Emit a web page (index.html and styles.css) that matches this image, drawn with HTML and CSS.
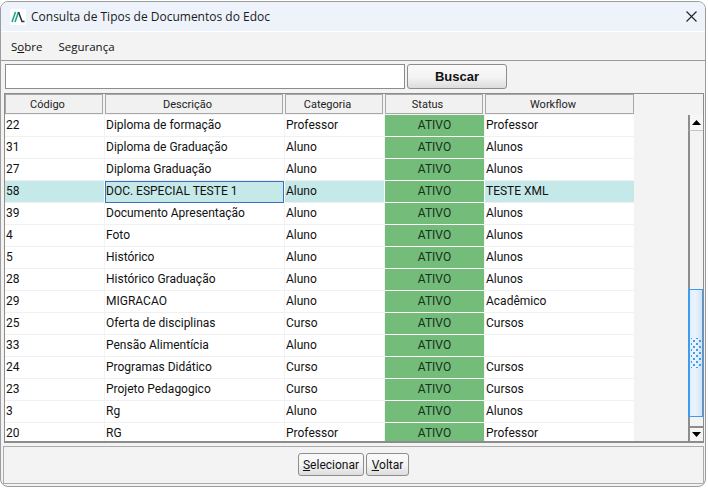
FILE: index.html
```html
<!DOCTYPE html>
<html lang="pt">
<head>
<meta charset="utf-8">
<title>Consulta de Tipos de Documentos do Edoc</title>
<link rel="stylesheet" href="styles.css">
</head>
<body>
<div class="window">
  <header class="titlebar">
    <svg class="logo" width="16" height="16" viewBox="0 0 16 16"><rect width="16" height="16" rx="2" fill="#fff"/><path d="M2 13 5.500 3M5 13 8.500 3" stroke="#1fa88f" stroke-width="1.6" fill="none"/><path d="M8.500 3 12 12.500h2.500" stroke="#25343a" stroke-width="1.500" fill="none"/></svg>
    <span class="title">Consulta de Tipos de Documentos do Edoc</span>
    <svg class="close" width="11" height="11" viewBox="0 0 11 11"><path d="M.5.5l10 10M10.500.5l-10 10" stroke="#222" stroke-width="1.1" fill="none"/></svg>
  </header>
  <nav class="menubar">
    <span>S<u>o</u>bre</span>
    <span>Segurança</span>
  </nav>
  <div class="search">
    <input class="search-input" type="text" aria-label="Buscar">
    <button class="btn btn-search">Buscar</button>
  </div>
  <div class="tableframe">
    <div class="tablecol">
      <div class="row head">
        <div class="h c1">Código</div><div class="h c2">Descrição</div><div class="h c3">Categoria</div><div class="h c4">Status</div><div class="h c5">Workflow</div>
      </div>
      <div class="row"><div class="c c1">22</div><div class="c c2">Diploma de formação</div><div class="c c3">Professor</div><div class="c c4 st">ATIVO</div><div class="c c5">Professor</div></div>
      <div class="row"><div class="c c1">31</div><div class="c c2">Diploma de Graduação</div><div class="c c3">Aluno</div><div class="c c4 st">ATIVO</div><div class="c c5">Alunos</div></div>
      <div class="row"><div class="c c1">27</div><div class="c c2">Diploma Graduação</div><div class="c c3">Aluno</div><div class="c c4 st">ATIVO</div><div class="c c5">Alunos</div></div>
      <div class="row sel"><div class="c c1">58</div><div class="c c2 focus">DOC. ESPECIAL TESTE 1</div><div class="c c3">Aluno</div><div class="c c4 st">ATIVO</div><div class="c c5">TESTE XML</div></div>
      <div class="row"><div class="c c1">39</div><div class="c c2">Documento Apresentação</div><div class="c c3">Aluno</div><div class="c c4 st">ATIVO</div><div class="c c5">Alunos</div></div>
      <div class="row"><div class="c c1">4</div><div class="c c2">Foto</div><div class="c c3">Aluno</div><div class="c c4 st">ATIVO</div><div class="c c5">Alunos</div></div>
      <div class="row"><div class="c c1">5</div><div class="c c2">Histórico</div><div class="c c3">Aluno</div><div class="c c4 st">ATIVO</div><div class="c c5">Alunos</div></div>
      <div class="row"><div class="c c1">28</div><div class="c c2">Histórico Graduação</div><div class="c c3">Aluno</div><div class="c c4 st">ATIVO</div><div class="c c5">Alunos</div></div>
      <div class="row"><div class="c c1">29</div><div class="c c2">MIGRACAO</div><div class="c c3">Aluno</div><div class="c c4 st">ATIVO</div><div class="c c5">Acadêmico</div></div>
      <div class="row"><div class="c c1">25</div><div class="c c2">Oferta de disciplinas</div><div class="c c3">Curso</div><div class="c c4 st">ATIVO</div><div class="c c5">Cursos</div></div>
      <div class="row"><div class="c c1">33</div><div class="c c2">Pensão Alimentícia</div><div class="c c3">Aluno</div><div class="c c4 st">ATIVO</div><div class="c c5"></div></div>
      <div class="row"><div class="c c1">24</div><div class="c c2">Programas Didático</div><div class="c c3">Curso</div><div class="c c4 st">ATIVO</div><div class="c c5">Cursos</div></div>
      <div class="row"><div class="c c1">23</div><div class="c c2">Projeto Pedagogico</div><div class="c c3">Curso</div><div class="c c4 st">ATIVO</div><div class="c c5">Cursos</div></div>
      <div class="row"><div class="c c1">3</div><div class="c c2">Rg</div><div class="c c3">Aluno</div><div class="c c4 st">ATIVO</div><div class="c c5">Alunos</div></div>
      <div class="row last"><div class="c c1">20</div><div class="c c2">RG</div><div class="c c3">Professor</div><div class="c c4 st">ATIVO</div><div class="c c5">Professor</div></div>
    </div>
    <div class="scrollbar">
      <div class="arrow"><svg width="9" height="5" viewBox="0 0 9 5"><path d="M4.500 0L9 5H0z" fill="#000"/></svg></div>
      <div class="track"></div>
      <div class="thumb"><div class="grip"></div></div>
      <div class="track small"></div>
      <div class="arrow down"><svg width="9" height="5" viewBox="0 0 9 5"><path d="M0 0h9L4.500 5z" fill="#000"/></svg></div>
    </div>
  </div>
  <footer class="actions">
    <button class="btn"><u>S</u>elecionar</button>
    <button class="btn"><u>V</u>oltar</button>
  </footer>
</div>
</body>
</html>
```
FILE: styles.css
```css
* { box-sizing: border-box; }
html, body { margin: 0; height: 100%; background: #fff; overflow: hidden; }
body { padding: 1px 0 0 0; font-family: Roboto, "Open Sans", sans-serif; color: #111; }
.window {
  width: 706px; height: 486px; background: #f3f3f3;
  border: 1px solid #9c9c9c; border-radius: 8px; overflow: hidden;
  display: flex; flex-direction: column;
}
.titlebar {
  height: 30px; flex: none; background: #eef3fb; display: flex; align-items: center;
  padding: 0 8px 0 9px; border-bottom: 1px solid #fff;
}
.logo { flex: none; }
.title { font: 12px "Open Sans", sans-serif; margin-left: 5px; flex: 1; color: #1a1a1a; }
.menubar {
  height: 29px; flex: none; display: flex; gap: 16px; align-items: center; padding: 0 10px;
  font: 11.500px "Open Sans", sans-serif; border-bottom: 1px solid #9a9a9a;
}
.search { display: flex; gap: 2px; padding: 3px 0 0 4px; height: 32px; flex: none; }
.search-input { width: 400px; height: 25px; border: 1px solid #8c8c8c; background: #fff; outline: 0; }
.btn {
  border: 1px solid #8e8e8e; border-radius: 3px; padding: 0;
  background: linear-gradient(#fafafa, #f3f3f3 55%, #dcdcdc);
  font: 12px Roboto, sans-serif; color: #111;
}
.btn-search { width: 100px; height: 25px; font: bold 13px "Liberation Sans", sans-serif; }
.tableframe {
  margin: 0 1px 0 3px; height: 350px; flex: none; border: 1px solid #8c8c8c; border-width: 1px 1px 2px 1px;
  display: flex; background: #f3f3f3; overflow: hidden;
}
.tablecol { flex: 1; min-width: 0; }
.row { display: flex; width: fit-content; height: 22px; background: #f3f3f3; }
.row.head { height: 21px; }
.h {
  height: 20px; margin-right: 2px; border: 1px solid #a8a8a8; background: #f1f1f1; text-align: center;
  font: 11px/19px Roboto, sans-serif; color: #222; padding-right: 13px;
}
.h.c2 { width: 178px; }
.h.c3, .h.c4 { width: 98px; }
.c { background: #fff; border-bottom: 1px solid #f0f0f0; font: 12px/21px Roboto, sans-serif; padding-left: 1px; margin-right: 1px; white-space: nowrap; }
.c1, .c3, .c4 { width: 99px; }
.h.c1 { width: 98px; }
.c2 { width: 179px; }
.c5, .h.c5 { width: 149px; margin-right: 0; }
.st { background: #74bc7a; text-align: center; padding: 0; border-bottom: 1px solid #fff; color: #16301a; }
.sel .c { background: #c5e9e8; }
.sel .st { background: #74bc7a; }
.sel { background: #fff; }
.focus { border: 1px solid #3a6fc4; line-height: 19px; padding-left: 0; }
.last { height: 20px; }
.scrollbar { width: 15px; flex: none; display: flex; flex-direction: column; margin-top: 21px; margin-left: auto; }
.arrow { height: 16px; background: #f6f6f6; border-left: 2px solid #8c8c8c; border-bottom: 1px solid #c4c4c4; display: flex; align-items: center; justify-content: center; flex: none; }
.arrow.down { height: 15px; border-top: 2px solid #8c8c8c; border-bottom: 0; }
.track { height: 158px; background: #f3f3f3; border-left: 2px solid #8c8c8c; flex: none; }
.track.small { flex: 1; height: auto; }
.thumb { height: 128px; flex: none; border: 1px solid #3d9bf0; border-left-width: 2px; background: linear-gradient(90deg, #e4effc, #eaf3fd 45%, #cfe3f8); display: flex; align-items: center; justify-content: center; }
.grip {
  width: 10px; height: 30px;
  background-image: radial-gradient(circle, #3d9bf0 .9px, transparent 1px), radial-gradient(circle, #3d9bf0 .9px, transparent 1px);
  background-size: 6px 6px; background-position: 0 0, 3px 3px;
}
.actions { flex: 1; margin: 3px 1px 2px 2px; border: 1px solid #ababab; display: flex; justify-content: center; align-items: center; gap: 2px; }
.actions .btn { height: 23px; padding: 0; margin-top: -1px; }
.actions .btn:first-child { width: 66px; }
.actions .btn:last-child { width: 43px; }
```
